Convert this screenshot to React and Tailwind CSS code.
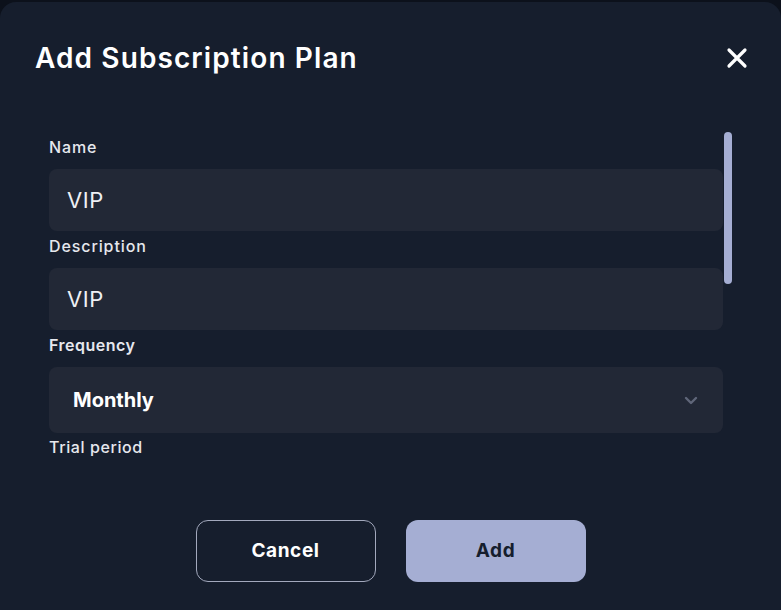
import React from "react";

function Field({ label, value, bold }) {
  return (
    <div className="flex flex-col">
      <label className={`text-[16px] leading-[20px] tracking-[0.9px] text-[#e6e8ee] ${bold ? "font-semibold" : "font-medium"}`}>
        {label}
      </label>
      <div className="mt-[12px] h-[62px] rounded-[8px] bg-[#222836] flex items-center px-[18px]">
        <span className="text-[22px] tracking-[0.6px] text-[#eef0f4]">{value}</span>
      </div>
    </div>
  );
}

export default function App() {
  return (
    <div
      className="h-[610px] w-[781px] overflow-hidden bg-[#0c111b] pt-[2px]"
      style={{ fontFamily: "Inter, 'Noto Sans', sans-serif" }}
    >
      <div className="h-[640px] rounded-t-[16px] bg-[#161e2d] flex flex-col">
        {/* Header */}
        <div className="flex items-center justify-between pl-[35px] pr-[32px] pt-[38px]">
          <h1 className="text-[28px] leading-[36px] font-semibold text-white tracking-[1.1px]">
            Add Subscription Plan
          </h1>
          <button className="text-white">
            <svg width="24" height="24" viewBox="0 0 24 24" fill="none" stroke="currentColor" strokeWidth="3.2" strokeLinecap="round">
              <path d="M4 4 L20 20 M20 4 L4 20" />
            </svg>
          </button>
        </div>

        {/* Scroll area */}
        <div className="mt-[56px] flex h-[340px] pl-[49px] pr-[48px] gap-[1px] overflow-hidden">
          <div className="flex-1 flex flex-col pt-[5px]">
            <Field label="Name" value="VIP" />
            <div className="h-[5px]" />
            <Field label="Description" value="VIP" />
            <div className="h-[5px]" />
            <div className="flex flex-col">
              <label className="text-[16px] leading-[20px] font-semibold tracking-[0.5px] text-[#e6e8ee]">Frequency</label>
              <div className="mt-[12px] h-[66px] rounded-[8px] bg-[#222836] flex items-center justify-between pl-[24px] pr-[24px]">
                <span className="text-[20px] font-bold text-white">Monthly</span>
                <svg width="16" height="16" viewBox="0 0 16 16" fill="none" stroke="#5f6679" strokeWidth="2.4" strokeLinecap="round" strokeLinejoin="round">
                  <path d="M3 6 L8 11 L13 6" />
                </svg>
              </div>
            </div>
            <label className="mt-[4px] text-[16px] leading-[20px] font-medium tracking-[0.6px] text-[#e6e8ee]">Trial period</label>
          </div>
          <div className="w-[9px]">
            <div className="h-[152px] w-[8px] rounded-full bg-[#a5aed3]" />
          </div>
        </div>

        {/* Footer */}
        <div className="mt-[48px] flex justify-center gap-[30px]">
          <button className="h-[62px] w-[180px] rounded-[12px] border border-[#a3a9bd] text-white text-[19px] font-bold tracking-[0.6px]">
            Cancel
          </button>
          <button className="h-[62px] w-[180px] rounded-[12px] bg-[#a5aed3] text-[#161e2d] text-[19px] font-bold tracking-[0.6px]">
            Add
          </button>
        </div>
      </div>
    </div>
  );
}
